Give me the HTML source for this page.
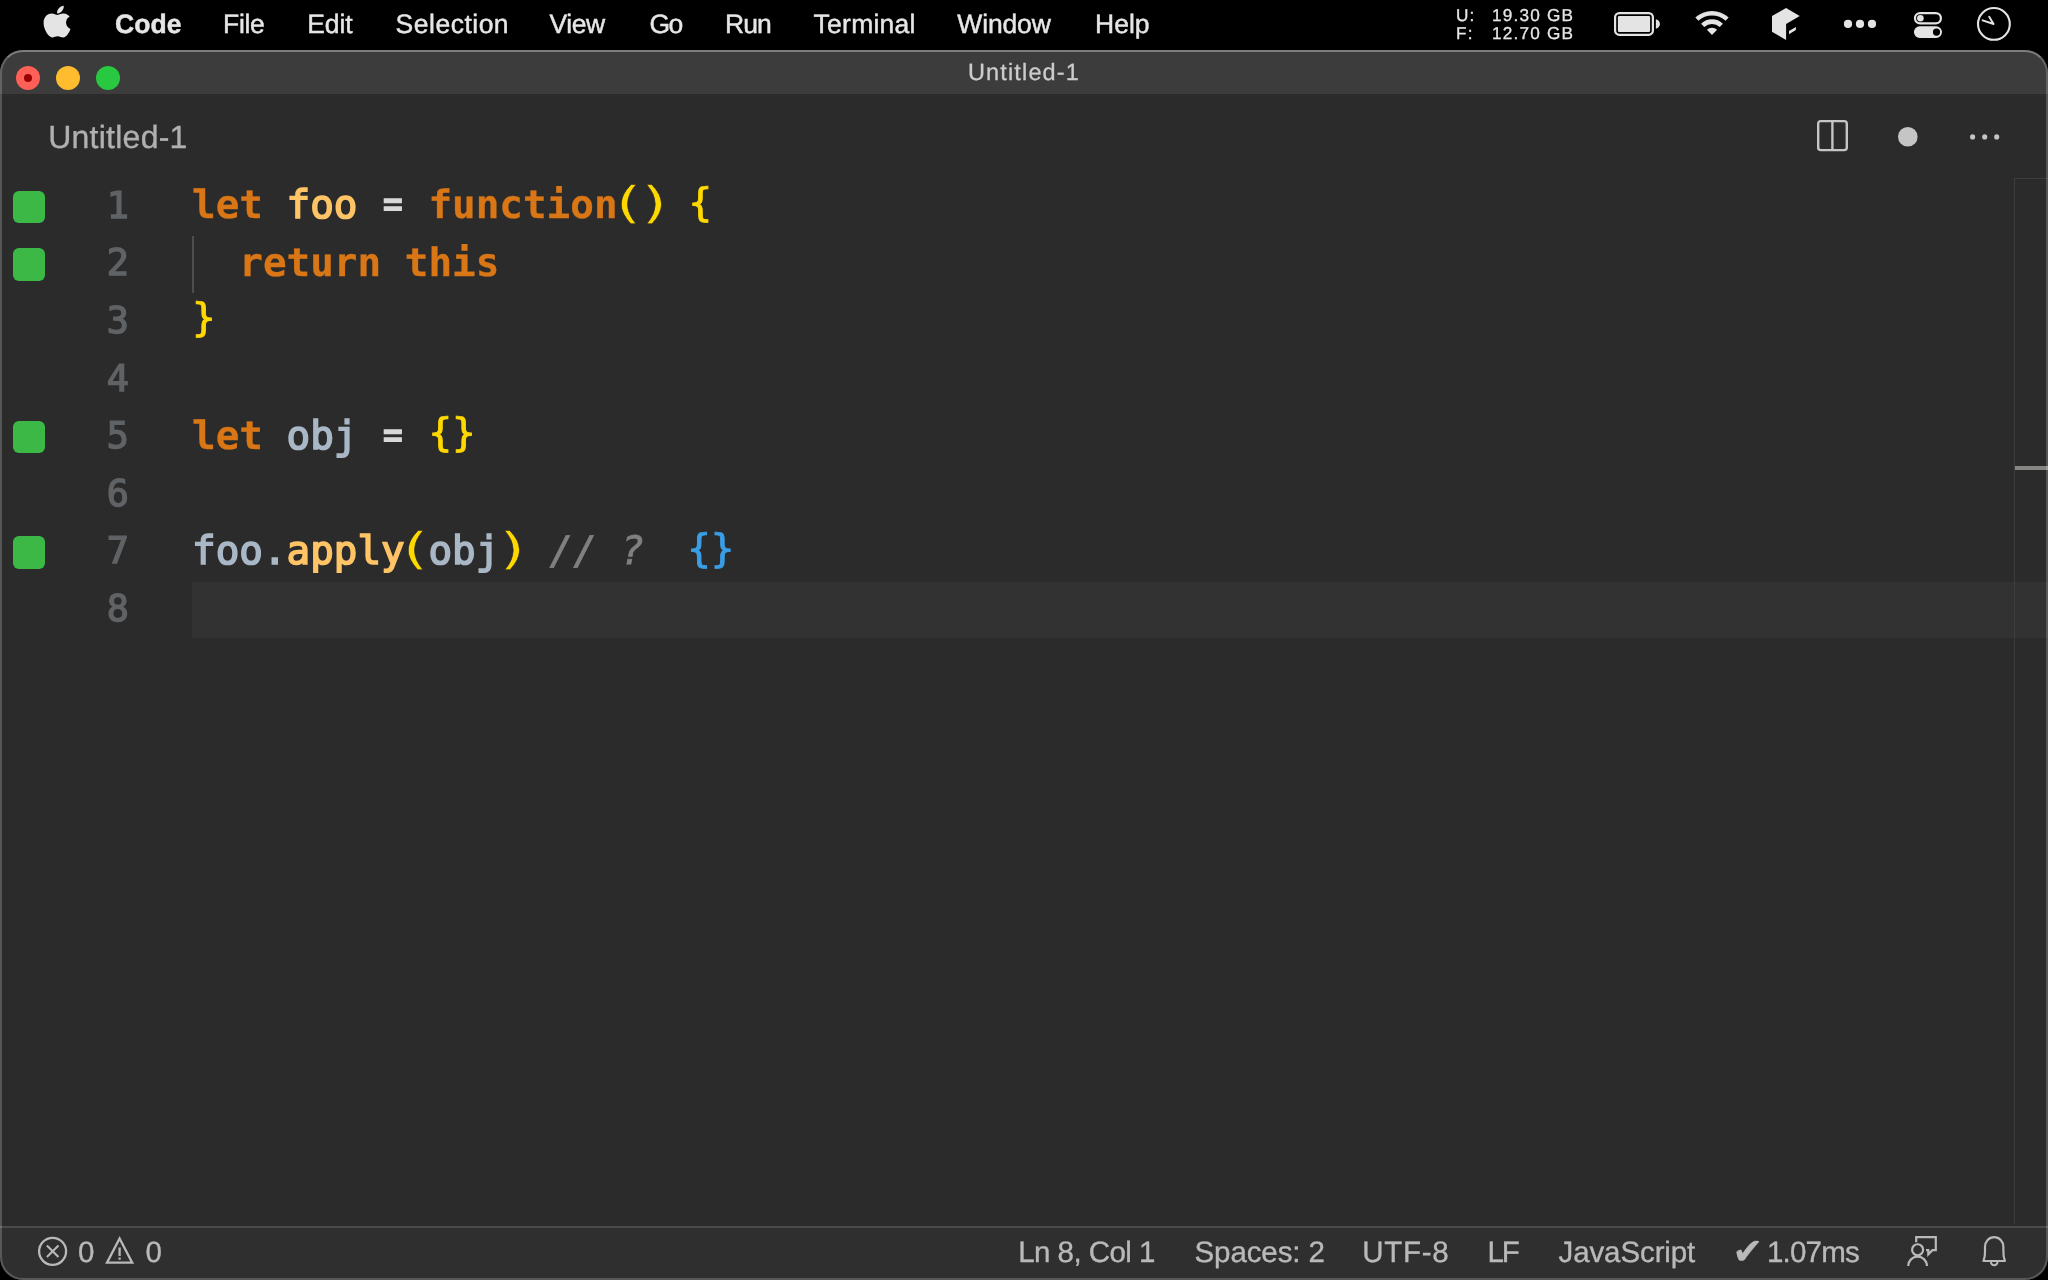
<!DOCTYPE html>
<html lang="en">
<head>
<meta charset="utf-8">
<title>Untitled-1</title>
<style>
*{box-sizing:border-box;margin:0;padding:0}
html,body{width:2048px;height:1280px;background:#000;overflow:hidden}
body{position:relative;font-family:"Liberation Sans",sans-serif;-webkit-font-smoothing:antialiased;text-rendering:geometricPrecision}
#menubar,#win{will-change:transform}
#menubar{position:absolute;left:0;top:0;width:2048px;height:50px;background:#000;color:#e6e6e6}
#menubar .mi{position:absolute;top:0;height:50px;line-height:48px;font-size:26.5px;white-space:nowrap;-webkit-text-stroke:0.45px}
#menubar .mi.b{font-weight:bold}
.st{position:absolute;font-size:17.2px;line-height:18px;height:18px;color:#e6e6e6;white-space:pre;letter-spacing:1.2px;-webkit-text-stroke:0.3px}
#win{position:absolute;left:0;top:50px;width:2048px;height:1230px;border-radius:23px;background:#2b2b2b;overflow:hidden}
#winborder{position:absolute;left:0;top:50px;width:2048px;height:1230px;border-radius:23px;border:2px solid rgba(255,255,255,.2);border-top-color:rgba(255,255,255,.33);pointer-events:none}
#titlebar{position:absolute;left:0;top:0;width:2048px;height:44px;background:#3c3c3c}
#title{position:absolute;left:0;width:2048px;top:0;height:44px;line-height:44px;text-align:center;font-size:23.5px;letter-spacing:1.15px;color:#cccccc;-webkit-text-stroke:0.3px}
.tl{position:absolute;top:16px;width:24px;height:24px;border-radius:50%}
#tab{position:absolute;left:48.2px;top:44px;height:84px;line-height:86px;font-size:32px;letter-spacing:0.250px;color:#b0b0b0;white-space:nowrap;-webkit-text-stroke:0.35px}
#editor{position:absolute;left:0;top:128px;width:2048px;height:1049px}
#hl{position:absolute;left:192px;top:404.0px;width:1856px;height:55.5px;background:#323232}
#guide{position:absolute;left:192px;top:57.6px;width:2.200px;height:57.6px;background:#4e4e4e}
#ruler{position:absolute;left:2014px;top:-0.5px;width:34px;height:1046.5px;border-left:1.500px solid #3d3d3d;border-top:1.500px solid #3d3d3d}
#mark{position:absolute;left:2015px;top:288px;width:33px;height:3.5px;background:#868684}
.ln{position:absolute;left:0;width:2048px;height:57.6px;line-height:57.6px;font-family:"DejaVu Sans Mono","Liberation Mono",monospace;font-size:39.27px;white-space:pre}
.ln .no{position:absolute;left:57.8px;top:-1.2px;width:71px;text-align:right;color:#606366;font-size:36.8px;-webkit-text-stroke:1.4px #606366}
.ln .code{position:absolute;left:192px;top:-0.8px;color:#a9b7c6;-webkit-text-stroke:1.6px}
.ln .g{position:absolute;left:13px;top:12.500px;width:32px;height:32.5px;border-radius:6px;background:#3cb847}
.k{color:#d97616;font-weight:bold;-webkit-text-stroke:0.300px}
.f{color:#ffc466}
.o{color:#d8d8d8;display:inline-block;transform:translateY(-0.8px) scaleX(0.83)}
.y{color:#ffd800;-webkit-text-stroke:0.9px;position:relative;top:-2.6px}
.p{display:inline-block;transform-origin:50% 56%;-webkit-text-stroke:0.35px #2b2b2b;top:0}
.p1{transform:translate(-2.4px,-1.5px) scale(1.66,1.12)}
.p2{transform:translate(2.6px,-1.5px) scale(1.66,1.12)}
.c{color:#808080;font-style:italic;position:relative;left:3px;-webkit-text-stroke:0.8px}
.q{color:#3a9ee6;position:relative;left:-1.3px;top:-1.5px;-webkit-text-stroke:0.9px}
#status{position:absolute;left:0;top:1176px;width:2048px;height:54px;background:#2f2f2f;border-top:2px solid #4b4b4b;color:#b9b9b9;font-size:29.5px}
#status .si{position:absolute;top:0;height:50px;line-height:49px;white-space:nowrap;-webkit-text-stroke:0.35px}
</style>
</head>
<body>
<div id="menubar">
<span class="mi b" style="left:115px;letter-spacing:0.1px">Code</span>
<span class="mi" style="left:223px;letter-spacing:-0.3px">File</span>
<span class="mi" style="left:307.3px;letter-spacing:-0.15px">Edit</span>
<span class="mi" style="left:395.6px;letter-spacing:0.5px">Selection</span>
<span class="mi" style="left:549.5px;letter-spacing:-0.4px">View</span>
<span class="mi" style="left:649.5px;letter-spacing:-1.5px">Go</span>
<span class="mi" style="left:725px;letter-spacing:-1px">Run</span>
<span class="mi" style="left:813.6px;letter-spacing:0.25px">Terminal</span>
<span class="mi" style="left:957.3px;letter-spacing:-0.15px">Window</span>
<span class="mi" style="left:1095px">Help</span>
<div class="st" style="left:1456px;top:6.2px">U:</div><div class="st" style="left:1492px;top:6.2px">19.30 GB</div>
<div class="st" style="left:1456px;top:24.1px">F:</div><div class="st" style="left:1492px;top:24.1px">12.70 GB</div>

<svg id="micons" width="2048" height="50" viewBox="0 0 2048 50" style="position:absolute;left:0;top:0">
<g fill="#e4e4e4">
<path transform="translate(43.3,3.6) scale(0.0715,0.0705)" d="M318.7 268.7c-.2-36.7 16.4-64.4 50-84.8-18.8-26.9-47.2-41.7-84.7-44.6-35.500-2.800-74.300 20.700-88.500 20.700-15 0-49.400-19.700-76.400-19.700C63.300 141.200 4 184.800 4 273.500q0 39.300 14.400 81.200c12.800 36.700 59 126.700 107.200 125.200 25.200-.6 43-17.900 75.800-17.900 31.800 0 48.300 17.900 76.400 17.900 48.600-.7 90.400-82.500 102.600-119.300-65.200-30.700-61.700-90-61.700-91.900zm-56.600-164.200c27.300-32.400 24.800-61.900 24-72.500-24.100 1.400-52 16.400-67.900 34.900-17.500 19.800-27.800 44.300-25.600 71.900 26.100 2 49.900-11.400 69.500-34.300z"/>
<rect x="1615.1" y="13.1" width="37.8" height="21.7" rx="4.2" fill="none" stroke="#e4e4e4" stroke-width="2.2"/>
<rect x="1617.9" y="15.9" width="32.2" height="16.1" rx="1.3"/>
<path d="M1655.9 19.3 C1661.3 20.6 1661.3 27.4 1655.9 28.7Z"/>
<polygon points="1772,16.1 1786.1,7.9 1799.7,16.1 1786.1,23.9 1786.1,40 1772,31.8"/>
<polygon points="1789,31.1 1795.9,27 1795.9,30.1 1789,34.2"/>
<circle cx="1848" cy="23.9" r="4.1"/><circle cx="1860" cy="23.9" r="4.1"/><circle cx="1872" cy="23.9" r="4.1"/>
<rect x="1915" y="13.1" width="25.9" height="10.3" rx="5.15" fill="none" stroke="#e4e4e4" stroke-width="2.2"/>
<circle cx="1920.4" cy="18.2" r="3.3"/>
<path fill-rule="evenodd" d="M1919.7 26.3h16.500a5.800 5.800 0 0 1 0 11.600h-16.500a5.800 5.800 0 0 1 0-11.600zM1940.100 32.100a3.600 3.600 0 1 0-7.200 0a3.600 3.600 0 1 0 7.200 0z"/>
<circle cx="1993.9" cy="23.9" r="15.9" fill="none" stroke="#e4e4e4" stroke-width="2.1"/>
<path d="M1982.6 20.3L1993.6 24L1989.2 16.800" fill="none" stroke="#e4e4e4" stroke-width="1.900" stroke-linecap="round" stroke-linejoin="round"/>
</g>
<path fill="#e4e4e4" d="M1695.31 17.58A24.2 24.2 0 0 1 1728.69 17.58L1725.59 20.83A19.7 19.7 0 0 0 1698.41 20.83Z M1701.10 23.66A15.8 15.8 0 0 1 1722.90 23.66L1719.72 26.99A11.2 11.2 0 0 0 1704.28 26.99Z M1712.00 35.10L1706.90 29.74A7.4 7.4 0 0 1 1717.10 29.74Z"/>
</svg>
</div>
<div id="win">
<div id="titlebar"></div>
<div class="tl" style="left:16px;background:#fe5f57"></div>
<div class="tl" style="left:24px;top:24px;width:8px;height:8px;background:#990000"></div>
<div class="tl" style="left:56px;background:#febc2e"></div>
<div class="tl" style="left:96px;background:#28c840"></div>
<div id="title">Untitled-1</div>
<div id="tab">Untitled-1</div>
<div id="editor">
<div id="hl"></div>
<div id="guide"></div>
<div id="ruler"></div>
<div id="mark"></div>
<div class="ln" style="top:0.0px"><i class="g"></i><span class="no">1</span><span class="code"><span class="k">let</span> <span class="f">foo</span> <span class="o">=</span> <span class="k">function</span><span class="y p p1">(</span><span class="y p p2">)</span> <span class="y">{</span></span></div>
<div class="ln" style="top:57.6px"><i class="g"></i><span class="no">2</span><span class="code">  <span class="k">return</span> <span class="k">this</span></span></div>
<div class="ln" style="top:115.2px"><span class="no">3</span><span class="code"><span class="y">}</span></span></div>
<div class="ln" style="top:172.8px"><span class="no">4</span></div>
<div class="ln" style="top:230.4px"><i class="g"></i><span class="no">5</span><span class="code"><span class="k">let</span> obj <span class="o">=</span> <span class="y">{}</span></span></div>
<div class="ln" style="top:288.0px"><span class="no">6</span></div>
<div class="ln" style="top:345.6px"><i class="g"></i><span class="no">7</span><span class="code">foo.<span class="f">apply</span><span class="y p p1">(</span>obj<span class="y p p2">)</span> <span class="c">// ?</span>  <span class="q">{}</span></span></div>
<div class="ln" style="top:403.2px"><span class="no">8</span></div>
</div>
<div id="status">
<span class="si" style="left:78px">0</span>
<span class="si" style="left:145.5px">0</span>
<span class="si" style="left:1018.2px;letter-spacing:-0.55px">Ln 8, Col 1</span>
<span class="si" style="left:1194.5px;letter-spacing:-0.1px">Spaces: 2</span>
<span class="si" style="left:1362.3px;letter-spacing:0.7px">UTF-8</span>
<span class="si" style="left:1487.4px;letter-spacing:-2px">LF</span>
<span class="si" style="left:1558.5px;letter-spacing:-0.1px">JavaScript</span>
<span class="si" style="left:1732.5px;font-size:36.5px;line-height:48px">✔</span>
<span class="si" style="left:1767px;letter-spacing:-0.8px">1.07ms</span>
</div>
</div>
<div id="winborder"></div>

<svg width="2048" height="1280" viewBox="0 0 2048 1280" style="position:absolute;left:0;top:0;pointer-events:none">
<g fill="none" stroke="#c5c5c5" stroke-width="2.4">
<rect x="1818.2" y="121.1" width="28.6" height="29" rx="2.6"/>
<path d="M1832.400 121.100V150.100"/>
</g>
<g fill="#c5c5c5">
<circle cx="1907.8" cy="136.700" r="9.8"/>
<circle cx="1972.600" cy="136.900" r="2.55"/><circle cx="1984.700" cy="136.900" r="2.55"/><circle cx="1996.700" cy="136.900" r="2.55"/>
</g>
<g fill="none" stroke="#b9b9b9" stroke-width="2.300">
<circle cx="52.600" cy="1251.300" r="13.500"/>
<path d="M46.900 1245.500L58.500 1257.100M58.500 1245.500L46.900 1257.100" stroke-width="2.100"/>
<path d="M119.600 1238.500L132.200 1262.700H107L119.600 1238.500Z" stroke-linejoin="miter"/>
<path d="M119.600 1247.600V1255.900M119.600 1257.400V1259.700" stroke-width="2.300"/>
<path d="M1916.200 1242.200V1237.100H1935.800V1250.200H1932.500L1928.300 1254.400V1250.100H1926" stroke-width="2.200"/>
<circle cx="1917.600" cy="1249.750" r="5.500" stroke-width="2.200"/>
<path d="M1908.200 1266A9.400 9.400 0 0 1 1927 1266" stroke-width="2.200"/>
<path d="M1983.500 1261 C1985.800 1255.500 1984.900 1251.500 1985 1247 C1985 1241.500 1989 1237.100 1994.200 1237.100 C1999.400 1237.100 2003.400 1241.500 2003.400 1247 C2003.500 1251.500 2002.600 1255.500 2004.900 1261 Z" stroke-linejoin="round" stroke-width="2.200"/>
<path d="M1990.800 1261.800A3.400 3.400 0 0 0 1997.600 1261.800" stroke-width="2"/>
</g>
</svg>
</body>
</html>
